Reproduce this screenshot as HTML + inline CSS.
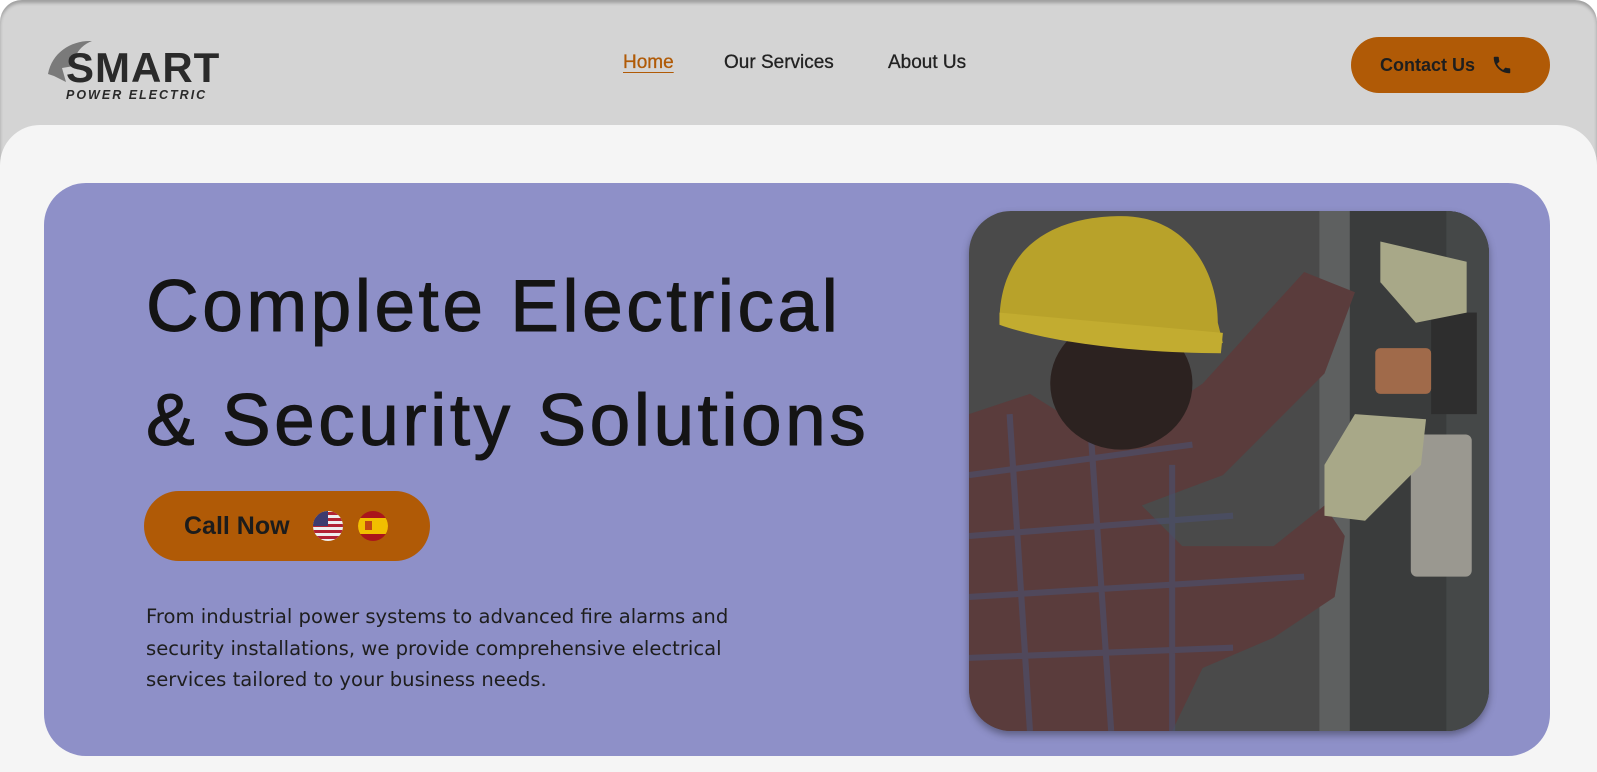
<!DOCTYPE html>
<html><head><meta charset="utf-8"><style>
*{margin:0;padding:0;box-sizing:border-box}
body{width:1597px;height:772px;background:#fff;overflow:hidden;font-family:"Liberation Sans",sans-serif;position:relative}
.frame{position:absolute;left:0;top:0;width:1597px;height:772px;background:#d4d4d4;border-radius:22px 22px 0 0;box-shadow:inset 0 3px 3px rgba(0,0,0,.25)}
.panel{position:absolute;left:0;top:125px;width:1597px;height:647px;background:#f5f5f5;border-radius:40px 40px 0 0}
.nav a{position:absolute;top:52px;font-size:19px;color:#222;text-decoration:none;-webkit-text-stroke:0.3px #222}
.contact{position:absolute;left:1351px;top:37px;width:199px;height:56px;border-radius:28px;background:#b05a06;color:#1e1e1e;font-size:18px;font-weight:bold;display:flex;align-items:center;padding-left:29px}
.card{position:absolute;left:44px;top:183px;width:1506px;height:573px;background:#8e90c8;border-radius:42px}
h1{position:absolute;left:146px;top:250px;font-size:73px;font-weight:normal;line-height:114px;color:#141414;letter-spacing:3.5px;-webkit-text-stroke:1px #141414}
.call{position:absolute;left:144px;top:491px;width:286px;height:70px;border-radius:35px;background:#b05a06;font-size:25px;font-weight:bold;color:#1c1c1c;display:flex;align-items:center;padding-left:40px}
p{position:absolute;left:146px;top:601px;width:660px;line-height:31.5px;color:#1e1e1e;font-family:"DejaVu Sans","Liberation Sans",sans-serif;font-size:19.6px}
.photo{position:absolute;left:969px;top:211px;width:520px;height:520px;border-radius:42px;overflow:hidden;box-shadow:0 4px 8px rgba(0,0,0,.35)}
</style></head><body>
<div class="frame"></div>
<div class="panel"></div>
<svg style="position:absolute;left:44px;top:38px" width="180" height="66" viewBox="0 0 180 66">
<path d="M4 36 C8 14 28 2 48 3 C40 6 34 12 32 18 L26 18 L30 28 L18 30 L22 44 L10 38 Z" fill="#7a7a7a"/>
<text x="22" y="44" font-family="Liberation Sans" font-weight="bold" font-size="42" fill="#2a2a2a" letter-spacing="1">SMART</text>
<text x="22" y="61" font-family="Liberation Sans" font-weight="bold" font-style="italic" font-size="12.5" fill="#2a2a2a" letter-spacing="2">POWER ELECTRIC</text>
</svg>
<div class="nav">
<a style="left:623px;color:#b05a06;-webkit-text-stroke:0.3px #b05a06;text-decoration:underline;text-underline-offset:4px">Home</a>
<a style="left:724px">Our Services</a>
<a style="left:888px">About Us</a>
</div>
<div class="contact">Contact Us
<svg style="margin-left:16px" width="22" height="22" viewBox="0 0 24 24"><path d="M6.6 10.8c1.4 2.8 3.8 5.1 6.6 6.6l2.2-2.2c.3-.3.7-.4 1-.2 1.1.4 2.300.6 3.6.6.6 0 1 .4 1 1V20c0 .6-.4 1-1 1C10.6 21 3 13.4 3 4c0-.6.4-1 1-1h3.5c.6 0 1 .4 1 1 0 1.3.2 2.5.6 3.6.1.3 0 .7-.2 1z" fill="#1e1e1e"/></svg></div>
<div class="card"></div>
<h1>Complete Electrical<br>&amp; Security Solutions</h1>
<div class="call">Call Now
<svg style="margin-left:22px" width="32" height="32" viewBox="0 0 32 32"><defs><clipPath id="c1"><circle cx="16" cy="16" r="15"/></clipPath></defs><g clip-path="url(#c1)"><rect width="32" height="32" fill="#eee"/><g fill="#b22234"><rect y="2" width="32" height="3"/><rect y="8" width="32" height="3"/><rect y="14" width="32" height="3"/><rect y="20" width="32" height="3"/><rect y="26" width="32" height="3"/></g><rect width="16" height="16" fill="#3c3b6e"/></g></svg>
<svg style="margin-left:13px" width="32" height="32" viewBox="0 0 32 32"><defs><clipPath id="c2"><circle cx="16" cy="16" r="15"/></clipPath></defs><g clip-path="url(#c2)"><rect width="32" height="32" fill="#aa151b"/><rect y="8" width="32" height="16" fill="#f1bf00"/><rect x="8" y="11" width="7" height="9" fill="#ad1519" opacity=".7"/></g></svg>
</div>
<p>From industrial power systems to advanced fire alarms and security installations, we provide comprehensive electrical services tailored to your business needs.</p>
<div class="photo"><svg width="520" height="520" viewBox="0 0 512 512">
<rect width="512" height="512" fill="#4a4a4a"/>
<rect x="345" y="0" width="30" height="512" fill="#5e6060"/>
<rect x="375" y="0" width="137" height="512" fill="#3a3c3c"/>
<rect x="470" y="0" width="42" height="512" fill="#454848"/>
<rect x="455" y="100" width="45" height="100" fill="#2e2e2e"/>
<rect x="435" y="220" width="60" height="140" rx="6" fill="#9a9890"/>
<rect x="400" y="135" width="55" height="45" rx="5" fill="#a06a4a"/>
<path d="M0 200 L60 180 L140 230 L230 170 L330 60 L380 80 L350 160 L250 260 L170 290 L210 330 L300 330 L350 290 L370 320 L360 380 L300 420 L230 450 L200 512 L0 512 Z" fill="#5a3c3c"/>
<g stroke="#4a5070" stroke-width="6" opacity=".6"><path d="M0 260 L220 230 M0 320 L260 300 M0 380 L330 360 M0 440 L260 430 M40 200 L60 512 M120 220 L140 512 M200 250 L200 512"/></g>
<ellipse cx="150" cy="170" rx="70" ry="65" fill="#2c2220"/>
<path d="M30 110 C30 30 90 5 150 5 C215 5 245 60 245 110 L250 130 C180 140 90 130 30 110Z" fill="#b8a22a"/>
<path d="M30 100 L250 120 L248 140 C170 140 80 130 30 112Z" fill="#c2ac30"/>
<path d="M405 30 L490 50 L490 100 L440 110 L405 70Z" fill="#a8a888"/>
<path d="M350 250 L380 200 L450 205 L445 250 L390 305 L350 300Z" fill="#a8a888"/>
</svg></div>
</body></html>
